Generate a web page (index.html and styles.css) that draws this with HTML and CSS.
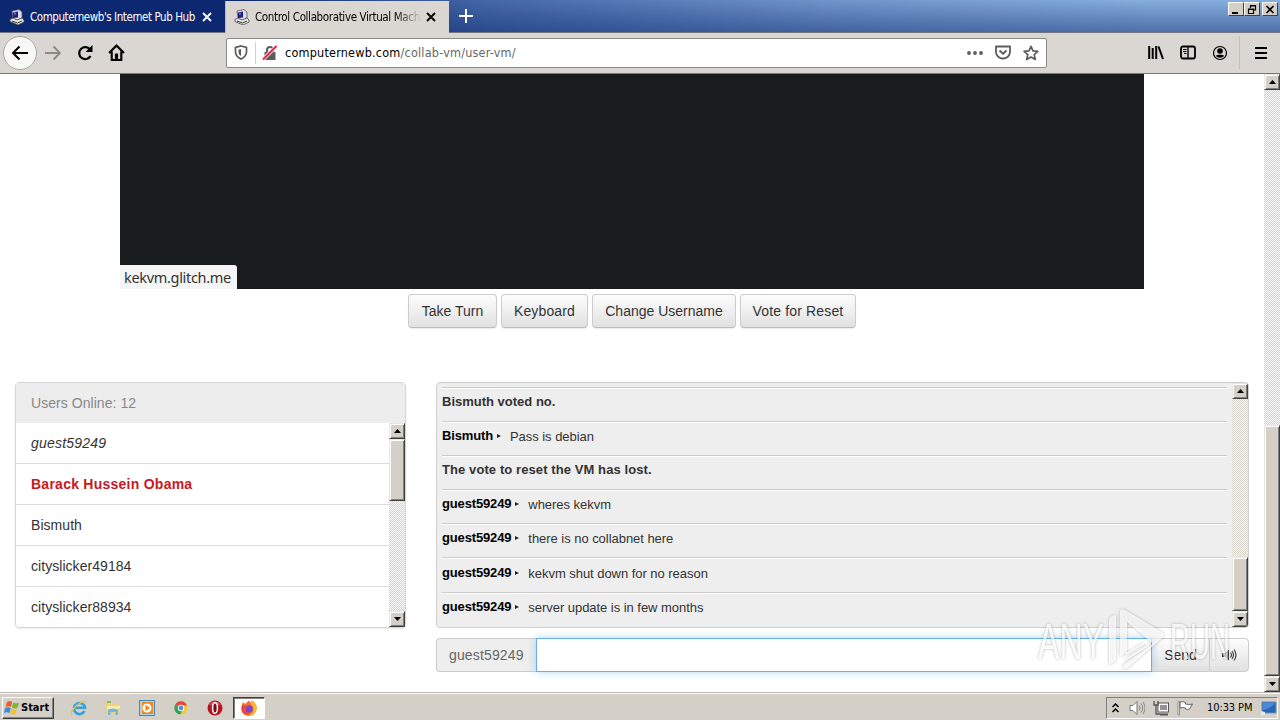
FILE: index.html
```html
<!DOCTYPE html>
<html lang="en">

    <head>
        <meta charset="UTF-8">
        <title>Control Collaborative Virtual Machines</title>
        <link rel="stylesheet" href="styles.css">
    </head>

    <body>
        <!-- shared icons -->
        <svg class="defs">
            <symbol id="pc" viewBox="0 0 16 16">
                <path d="M3 2l7-1.500 3 2.500v6l-5 2.500-4-2z" fill="#dcdce6" stroke="#55556a" stroke-width=".8" />
                <path d="M4 3.500l5-1v6l-5 .5z" fill="#20207c" />
                <path d="M5 4l2-.3-1 3z" fill="#7c8cd8" />
                <path d="M1 10.500l3-1.500 4 2 5-2 2 2v2l-6 3-8-3.500z" fill="#e8e8e8" stroke="#444" stroke-width=".8" />
                <path d="M3 12l5.500 2 4.500-2" fill="none" stroke="#333" />
            </symbol>
            <symbol id="cross" viewBox="0 0 10 10">
                <path d="M1 1l8 8M9 1l-8 8" fill="none" stroke="currentColor" stroke-width="1.800" />
            </symbol>
            <symbol id="up" viewBox="0 0 7 4">
                <path d="M0 4h7L3.500 0z" />
            </symbol>
            <symbol id="down" viewBox="0 0 7 4">
                <path d="M0 0h7L3.500 4z" />
            </symbol>
        </svg>

        <div class="tabs">
            <div class="tab">
                <svg class="favicon"><use href="#pc" /></svg>
                <span class="tab-title first">Computernewb's Internet Pub Hub</span>
                <svg class="close"><use href="#cross" /></svg>
            </div>
            <div class="tab active">
                <svg class="favicon"><use href="#pc" /></svg>
                <span class="tab-title second">Control Collaborative Virtual Machi</span>
                <svg class="close"><use href="#cross" /></svg>
            </div>
            <svg class="new-tab" viewBox="0 0 14 14"><path d="M7 0v14M0 7h14" stroke="#fff" stroke-width="2" /></svg>
            <div class="window-buttons">
                <span class="win-btn"><svg viewBox="0 0 12 11"><path d="M2 9h6" stroke="#000" stroke-width="2" /></svg></span>
                <span class="win-btn"><svg viewBox="0 0 12 11"><path d="M4.500 4V1.500h5v4.500H8M4 2h6M2.500 5h5v4.500h-5zM2 5.500h6" fill="none" stroke="#000" stroke-width="1.200" /></svg></span>
                <span class="win-btn last"><svg viewBox="0 0 12 11"><path d="M2.500 2l7 7M9.500 2l-7 7" stroke="#000" stroke-width="1.600" /></svg></span>
            </div>
        </div>

        <div class="toolbar">
            <div class="back"><svg width="18" height="16" viewBox="0 0 18 16"><path d="M17 8H2M8.500 1.500L2 8l6.500 6.500" fill="none" stroke="#000" stroke-width="2" /></svg></div>
            <svg class="forward" viewBox="0 0 18 16"><path d="M1 8h15M9.500 1.500L16 8l-6.500 6.500" fill="none" stroke="#8b8984" stroke-width="1.800" /></svg>
            <svg class="reload" viewBox="0 0 16 16"><path d="M13 4.500A6 6 0 1 0 13.500 11" fill="none" stroke="#000" stroke-width="2.200" /><path d="M15.500 0v7h-7z" /></svg>
            <svg class="home" viewBox="0 0 16 16"><path d="M1 8.500L8 1.500l7 7M3.500 7v8h9V7" fill="none" stroke="#000" stroke-width="2" /><path d="M6.500 9h3v6h-3z" /></svg>
            <div class="url-bar">
                <svg class="shield" viewBox="0 0 14 15"><path d="M7 1l5.500 1.500V7c0 3.500-2.500 5.500-5.500 7-3-1.500-5.500-3.500-5.500-7V2.500z" fill="none" stroke="#5c5c5c" stroke-width="1.700" /><path d="M7 4v7c-1.800-1-2.500-2.500-2.500-4V4.700z" fill="#5c5c5c" /></svg>
                <i class="url-sep"></i>
                <svg class="lock" viewBox="0 0 16 16"><path d="M5 8V5a3 3 0 0 1 6 0v3" fill="none" stroke="#5c5c5c" stroke-width="2" /><path d="M2.500 7h11v8h-11z" fill="#5c5c5c" /><path d="M1 14.500L14 1.500" stroke="#fff" stroke-width="3.500" /><path d="M1 14.500L14.500 1" stroke="#e22850" stroke-width="2.200" /></svg>
                <span class="url"><b>computernewb.com</b>/collab-vm/user-vm/</span>
                <svg class="dots" viewBox="0 0 16 4" fill="#5c5c5c"><circle cx="2" cy="2" r="1.900" /><circle cx="8" cy="2" r="1.900" /><circle cx="14" cy="2" r="1.900" /></svg>
                <svg class="pocket" viewBox="0 0 16 15"><path d="M1 1.500h14V7c0 4-3.500 6.500-7 6.500S1 11 1 7z" fill="none" stroke="#5c5c5c" stroke-width="1.800" stroke-linejoin="round" /><path d="M4.500 5.500L8 8.800l3.500-3.300" fill="none" stroke="#5c5c5c" stroke-width="1.900" /></svg>
                <svg class="star" viewBox="0 0 16 16"><path d="M8 1.300l2 4.500 4.900.5-3.700 3.300 1.100 4.900L8 12l-4.300 2.500 1.100-4.900L1.100 6.300 6 5.800z" fill="none" stroke="#5c5c5c" stroke-width="1.700" stroke-linejoin="round" /></svg>
            </div>
            <div class="tools">
                <svg width="16" height="15" viewBox="0 0 16 15"><path d="M1.200 1v13M4.700 3v11M8.200 1v13M10.500 1.500l4.500 12.500" stroke="#000" stroke-width="2" /></svg>
                <svg width="16" height="15" viewBox="0 0 16 15"><rect x="1" y="1.500" width="14" height="12" rx="2" fill="none" stroke="#000" stroke-width="1.800" /><path d="M8 2v11" stroke="#000" stroke-width="1.400" /><path d="M3 4.500h3.500M3 6.500h3.500M4 8.500h2.500" stroke="#000" /></svg>
                <svg width="16" height="16" viewBox="0 0 16 16"><circle cx="8" cy="8" r="6.500" fill="none" stroke="#000" stroke-width="1.200" /><circle cx="8" cy="6" r="2.800" /><path d="M3.800 10.800c1-1.500 7.400-1.500 8.400 0-1.500 2.600-6.900 2.600-8.400 0z" /></svg>
                <i class="tool-sep"></i>
                <svg width="12" height="12" viewBox="0 0 12 12"><path d="M0 1h12M0 6h12M0 11h12" stroke="#000" stroke-width="2" /></svg>
            </div>
        </div>

        <div class="viewport">
            <div class="page">
                <div class="display">
                    <span class="status">kekvm.glitch.me</span>
                </div>
                <div class="controls">
                    <button class="btn turn">Take Turn</button>
                    <button class="btn keyboard">Keyboard</button>
                    <button class="btn rename">Change Username</button>
                    <button class="btn vote">Vote for Reset</button>
                </div>
                <div class="columns">
                    <div class="users">
                        <div class="users-head">Users Online: 12</div>
                        <div class="users-body">
                            <div class="users-list">
                                <div class="user me"><span>guest59249</span></div>
                                <div class="user admin"><span>Barack Hussein Obama</span></div>
                                <div class="user"><span>Bismuth</span></div>
                                <div class="user"><span>cityslicker49184</span></div>
                                <div class="user"><span>cityslicker88934</span></div>
                            </div>
                            <div class="scrollbar">
                                <span class="arrow"><svg><use href="#up" /></svg></span>
                                <span class="thumb users-thumb"></span>
                                <span class="arrow bottom"><svg><use href="#down" /></svg></span>
                            </div>
                        </div>
                    </div>
                    <div class="chat">
                        <div class="chat-box">
                            <div class="messages">
                                <div class="msg"><b class="notice">Bismuth voted no.</b></div>
                                <div class="msg"><b>Bismuth</b><i></i><span>Pass is debian</span></div>
                                <div class="msg"><b class="notice long">The vote to reset the VM has lost.</b></div>
                                <div class="msg"><b>guest59249</b><i></i><span>wheres kekvm</span></div>
                                <div class="msg"><b>guest59249</b><i></i><span>there is no collabnet here</span></div>
                                <div class="msg tall"><b>guest59249</b><i></i><span>kekvm shut down for no reason</span></div>
                                <div class="msg"><b>guest59249</b><i></i><span>server update is in few months</span></div>
                            </div>
                            <div class="scrollbar">
                                <span class="arrow"><svg><use href="#up" /></svg></span>
                                <span class="thumb chat-thumb"></span>
                                <span class="arrow bottom"><svg><use href="#down" /></svg></span>
                            </div>
                        </div>
                        <div class="input-group">
                            <span class="addon">guest59249</span>
                            <input class="chat-input" type="text">
                            <button class="send">Send</button>
                            <button class="sound"><svg width="15" height="12" viewBox="0 0 15 12"><path d="M0 4h3l4-3.500v11L3 8H0z" fill="#444" /><path d="M8.500 3.500q2 2.500 0 5M10 2q3 4 0 8M12 .5q4 5.500 0 11" fill="none" stroke="#444" stroke-width="1.200" /></svg></button>
                        </div>
                    </div>
                </div>
            </div>
            <div class="scrollbar">
                <span class="arrow"><svg><use href="#up" /></svg></span>
                <span class="thumb page-thumb"></span>
                <span class="arrow bottom"><svg><use href="#down" /></svg></span>
            </div>
        </div>

        <div class="taskbar">
            <div class="start">
                <svg width="16" height="16" viewBox="0 0 16 16"><path d="M3 2q3-2 5 0L7 7Q4.500 5.500 1.500 7z" fill="#e8602c" /><path d="M9 2.500q3 1.500 6 0L13.500 8q-3 1.200-5.500-.5z" fill="#7fb62e" /><path d="M1.200 8q3-1.500 5.500 0L5.500 13Q3 11.500 0 13z" fill="#3c8ad8" /><path d="M7.500 8.500q2.500 1.500 5.500.5l-1.500 5q-3 1.200-5.200-.5z" fill="#f4c12c" /></svg>
                <span>Start</span>
            </div>
            <div class="launchers">
                <svg viewBox="0 0 18 18"><path d="M14.500 12A5.500 5.500 0 1 1 15 8.800H5" fill="none" stroke="#35a0dd" stroke-width="2.600" /><path d="M2 16C-1 13 10 1 16.500 2.500" fill="none" stroke="#e9c34c" stroke-width="1.400" /></svg>
                <svg viewBox="0 0 18 18"><path d="M2 3h6l1 2h7v9H2z" fill="#ecd281" /><path d="M3 2h4v2H3z" fill="#7fc264" /><path d="M3 7h13v3H3z" fill="#f8eab5" /><path d="M4 16v-5q5-3 10 0v5h-2.500v-3h-5v3z" fill="#72b8dc" /></svg>
                <svg viewBox="0 0 18 18"><rect x="1.500" y="1.500" width="15" height="15" fill="#a8d2ee" stroke="#4289bd" /><rect x="4" y="3" width="11" height="12" fill="#f08a1c" /><circle cx="9" cy="9" r="4.500" fill="#fff" /><path d="M7.500 6l4.500 3-4.500 3z" fill="#ee7d11" /></svg>
                <svg viewBox="0 0 18 18"><circle cx="9" cy="9" r="6.500" fill="#f6c82d" /><path d="M9 9L3.200 5.800A6.500 6.500 0 0 1 15 6.500H9z" fill="#e1493a" /><path d="M9 9L3.200 5.800A6.500 6.500 0 0 0 8 15.500l3-5z" fill="#32a153" /><circle cx="9" cy="9" r="3.200" fill="#fff" /><circle cx="9" cy="9" r="2.400" fill="#4c8ee8" /></svg>
                <svg viewBox="0 0 18 18"><circle cx="9" cy="9" r="7.500" fill="#b51620" /><path d="M3 5.500Q9-1 15 5.500 9 8 3 5.500z" fill="#d9505a" /><ellipse cx="9" cy="9" rx="2.400" ry="5.300" fill="#7b0b12" stroke="#fff" stroke-width="1.500" /></svg>
            </div>
            <div class="running">
                <svg width="18" height="18" viewBox="0 0 18 18"><path d="M9 17C3 17 0 12 1.500 7L3 3l2 2 4-3.500 2 2.500 2-2c3 3 4 5 3.500 8-.5 4-3.500 7-7.500 7z" fill="#fb7126" /><path d="M11 1c5 3 7 7 5 11-1.500 3-4 4.500-7 4.500 5-3 6-8 2-11z" fill="#fdb82c" /><circle cx="9" cy="10" r="3.800" fill="#7548cd" /><path d="M2 6c4 1 4 2 7 2-2 2-4 2-5 1 0 3 3 6 7 4-3 4-9 2-9-3z" fill="#ef3c4b" /></svg>
            </div>
            <div class="tray">
                <svg width="7" height="10" viewBox="0 0 7 10"><path d="M.5 4l3-3 3 3M.5 9l3-3 3 3" fill="none" stroke="#000" stroke-width="1.500" /></svg>
                <svg class="volume" viewBox="0 0 16 16"><path d="M1 5.500h3L8 1.500v13L4 10.500H1z" fill="#fff" stroke="#777" /><path d="M10 5.500q2 2.500 0 5M12 3.500q3.500 4.500 0 9M14 2q4 6 0 12" fill="none" stroke="#8b8b8b" /></svg>
                <svg class="network" viewBox="0 0 16 16"><rect x="5" y="3" width="10.500" height="9" fill="#fff" stroke="#555" /><path d="M7 5h7v5H7z" fill="#929292" /><path d="M7 14.500h8" stroke="#555" stroke-width="2" /><path d="M1 1v4h4V1M3 5v9h4" fill="none" stroke="#555" stroke-width="1.300" /></svg>
                <svg class="flag" viewBox="0 0 16 16"><path d="M1 1.500h1.500V15H1z" fill="#fff" stroke="#777" stroke-width=".8" /><path d="M3 2q3-1 5.500.5V4q3 1 7 0l-3 5q-2 1-4 0V8Q6 7 3 8z" fill="#fff" stroke="#666" /></svg>
                <span class="clock">10:33 PM</span>
                <svg class="desktop" viewBox="0 0 16 14"><path d="M1 1h14v11H1z" fill="#2865b5" stroke="#6c8fbb" /><path d="M2 9q8-1 12-7H2z" fill="#478bd8" /><path d="M0 10l4 1v3H0z" fill="#dde8f2" /></svg>
            </div>
        </div>

        <!-- watermark -->
        <svg class="watermark" viewBox="0 0 200 66">
            <path class="logo" d="M73 14q0-6 7-6v46l-7 4zM84 4q1-3 5-1l37 22q4 3 0 6L92 61q-5 2-6-2l29-21q2-1 0-3L91 15v30l-7 5z" />
            <path class="logo-lines" d="M90 47l18-11M89 53l24-15" />
            <text class="mark" x="2" y="52" textLength="66" lengthAdjust="spacingAndGlyphs">ANY</text>
            <text class="mark" x="134" y="52" textLength="60" lengthAdjust="spacingAndGlyphs">RUN</text>
        </svg>
    </body>

</html>
```
FILE: styles.css
```css
* {
    box-sizing: border-box;
}

body {
    display: flex;
    flex-direction: column;
    width: 1280px;
    height: 720px;
    margin: 0;
    overflow: hidden;
    background-color: white;
    font-family: "Liberation Sans", Arial, sans-serif;
    font-size: 14px;
    color: #333;
}

svg {
    display: block;
    flex: none;
}

.defs {
    position: absolute;
    width: 0;
    height: 0;
}

/* tabs */
.tabs {
    display: flex;
    flex: none;
    height: 33px;
    border-bottom: 1px solid #6f7680;
    background: linear-gradient(to bottom, rgba(10, 36, 106, 0), rgba(10, 36, 106, 0.45)),
        linear-gradient(to right, #0a246a 17%, #4468a8 38%, #7095cb 65%, #86aede 90%);
    font-family: "DejaVu Sans Condensed", "DejaVu Sans", sans-serif;
    font-size: 11.5px;
}

.tab {
    display: flex;
    align-items: center;
    width: 225px;
    padding: 1px 0 0 9px;
    color: white;
    background-color: #0c2871;
}

.tab.active {
    height: 33px;
    margin-top: 1px;
    width: 224px;
    background-color: #dad7d2;
    border-left: 1px solid #b8b8b8;
    padding: 0 0 2px 8px;
    color: black;
}

.favicon {
    width: 16px;
    height: 16px;
}

.tab-title {
    width: 168px;
    margin-left: 5px;
    overflow: hidden;
    white-space: nowrap;
}

.tab-title.first {
    letter-spacing: -0.44px;
}

.tab-title.second {
    width: 167px;
    letter-spacing: -0.36px;
    -webkit-mask-image: linear-gradient(to right, #000 84%, transparent);
    mask-image: linear-gradient(to right, #000 84%, transparent);
}

.close {
    width: 10px;
    height: 10px;
    margin-left: 4px;
}

.new-tab {
    width: 14px;
    height: 14px;
    margin: 9px 0 0 10px;
}

.window-buttons {
    display: flex;
    margin: 2px 2px 0 auto;
}

.win-btn {
    width: 16px;
    height: 14px;
    padding: 1px;
    background-color: #d4d0c8;
    border: 1px solid;
    border-color: #fff #404040 #404040 #fff;
}

.win-btn.last {
    margin-left: 2px;
}

/* toolbar */
.toolbar {
    display: flex;
    align-items: center;
    flex: none;
    height: 41px;
    padding: 0 0 1px 3px;
    background-color: #dad7d2;
    border-bottom: 1px solid #777;
}

.back {
    display: flex;
    align-items: center;
    justify-content: center;
    width: 34px;
    height: 34px;
    background-color: #f8f8f7;
    border: 1px solid #aaa8a4;
    border-radius: 50%;
}

.forward {
    width: 18px;
    height: 16px;
    margin-left: 7px;
}

.reload {
    width: 16px;
    height: 16px;
    margin-left: 15px;
}

.home {
    width: 17px;
    height: 17px;
    margin-left: 15px;
}

.url-bar {
    display: flex;
    align-items: center;
    width: 821px;
    height: 30px;
    margin-left: 101px;
    padding-left: 7px;
    background-color: white;
    border: 1px solid #8a8a8a;
    border-radius: 2px;
}

.shield {
    width: 14px;
    height: 15px;
}

.url-sep {
    width: 1px;
    height: 22px;
    margin: 0 6px 0 7px;
    background-color: #d0d0d0;
}

.lock {
    width: 16px;
    height: 16px;
}

.url {
    width: 682px;
    margin-left: 7px;
    font-family: "DejaVu Sans Condensed", "DejaVu Sans", sans-serif;
    font-size: 12.5px;
    letter-spacing: 0.22px;
    color: #666;
}

.url b {
    font-weight: normal;
    color: black;
}

.dots {
    width: 16px;
    height: 4px;
}

.pocket {
    width: 16px;
    height: 15px;
    margin-left: 12px;
}

.star {
    width: 16px;
    height: 16px;
    margin-left: 12px;
}

.tools {
    display: flex;
    align-items: center;
    gap: 16px;
    margin-left: 101px;
}

.tool-sep {
    width: 1px;
    height: 33px;
    margin: 0 -1px 0 -5px;
    background-color: #c2bfba;
}

/* scrollbars */
.scrollbar {
    display: flex;
    flex: none;
    flex-direction: column;
    width: 16px;
    background: repeating-conic-gradient(#d4d0c8 0 25%, #fff 0 50%) 0 0 / 2px 2px;
}

.arrow,
.thumb {
    flex: none;
    background-color: #d4d0c8;
    border: 1px solid;
    border-color: #e8e6e0 #404040 #404040 #e8e6e0;
    box-shadow: inset 1px 1px #fff, inset -1px -1px #808080;
}

.arrow {
    display: flex;
    align-items: center;
    justify-content: center;
    height: 16px;
}

.arrow svg {
    width: 7px;
    height: 4px;
}

.arrow.bottom {
    margin-top: auto;
}

.users-thumb {
    height: 62px;
}

.chat-thumb {
    height: 54px;
    margin-top: 158px;
}

.page-thumb {
    height: 251px;
    margin-top: 335px;
}

/* page */
.viewport {
    display: flex;
    flex: none;
    height: 618px;
}

.page {
    width: 1264px;
}

.display {
    display: flex;
    align-items: flex-end;
    width: 1024px;
    height: 215px;
    margin-left: 120px;
    background-color: #191c1d;
}

.status {
    width: 117px;
    height: 24px;
    padding-left: 4px;
    line-height: 25px;
    white-space: nowrap;
    background-color: #f5f5f5;
    border-top-right-radius: 3px;
    font-family: "Noto Sans", sans-serif;
    font-size: 14.5px;
    letter-spacing: -0.32px;
}

.controls {
    display: flex;
    justify-content: center;
    gap: 4px;
    margin-top: 5px;
}

button {
    padding: 0;
    font-family: inherit;
    font-size: 14px;
    color: #333;
    white-space: nowrap;
    background: linear-gradient(#fdfdfd, #e1e1e1);
    border: 1px solid #ccc;
}

.btn {
    height: 34px;
    border-radius: 4px;
    border-bottom-color: #bbb;
    box-shadow: 0 1px 1px rgba(0, 0, 0, 0.08);
}

.turn {
    width: 89px;
}

.keyboard {
    width: 87px;
    letter-spacing: 0.15px;
}

.rename {
    width: 144px;
}

.vote {
    width: 116px;
    letter-spacing: 0.15px;
}

.columns {
    display: flex;
    gap: 30px;
    margin: 54px 0 0 15px;
}

.users {
    width: 391px;
    height: 246px;
    border: 1px solid #d6d6d6;
    border-radius: 4px;
    box-shadow: 0 1px 2px rgba(0, 0, 0, 0.08);
}

.users-head {
    height: 40px;
    padding-left: 15px;
    line-height: 40px;
    letter-spacing: 0.05px;
    color: #888;
    background-color: #ededed;
}

.users-body {
    display: flex;
    height: 204px;
}

.users-list {
    flex: 1;
}

.user {
    height: 41px;
    padding-left: 15px;
    line-height: 40px;
    letter-spacing: 0.05px;
    border-bottom: 1px solid #ddd;
}

.user:last-child {
    height: 40px;
    border-bottom: none;
}

.me {
    font-style: italic;
    letter-spacing: 0.2px;
}

.admin {
    font-weight: bold;
    letter-spacing: 0.25px;
    color: #c9181e;
}

.chat {
    width: 813px;
}

.chat-box {
    display: flex;
    height: 246px;
    overflow: hidden;
    background-color: #eee;
    border: 1px solid #d0d0d0;
    border-radius: 4px;
}

.messages {
    flex: 1;
    padding: 4px 5px 0;
}

.msg {
    display: flex;
    align-items: center;
    height: 34px;
    padding-bottom: 5px;
    border-top: 1px solid #ccc;
    box-shadow: inset 0 1px #fff;
    font-size: 13px;
}

.msg.tall {
    height: 35px;
}

.msg b {
    padding-bottom: 1px;
    letter-spacing: -0.15px;
    color: black;
}

.msg .notice {
    padding-bottom: 2px;
    letter-spacing: 0;
    color: #333;
}

.msg .long {
    letter-spacing: 0.09px;
}

.msg i {
    margin: 0 9px 0 4px;
    border: 2.5px solid transparent;
    border-left: 4px solid #222;
    border-right: 0;
}

.msg span {
    padding-top: 1px;
    letter-spacing: -0.04px;
}

.input-group {
    display: flex;
    height: 34px;
    margin-top: 10px;
}

.addon {
    width: 100px;
    padding-left: 12px;
    line-height: 32px;
    letter-spacing: 0.15px;
    color: #666;
    background-color: #eee;
    border: 1px solid #ccc;
    border-right: none;
    border-radius: 4px 0 0 4px;
}

.chat-input {
    width: 616px;
    padding: 0 12px;
    border: 1px solid #66afe9;
    box-shadow: 0 0 8px rgba(102, 175, 233, 0.5);
    z-index: 1;
}

.send {
    width: 57px;
    border-width: 1px 0;
}

.sound {
    display: flex;
    align-items: center;
    justify-content: center;
    width: 40px;
    border-radius: 0 4px 4px 0;
}

/* taskbar */
.taskbar {
    display: flex;
    align-items: center;
    flex: none;
    height: 28px;
    padding: 2px 2px 0 2px;
    background-color: #d4d0c8;
    border-top: 1px solid #bbb8b2;
    box-shadow: inset 0 1px #fff;
}

.start {
    display: flex;
    align-items: center;
    gap: 1px;
    width: 52px;
    height: 22px;
    padding-left: 1px;
    border: 1px solid;
    border-color: #fff #404040 #404040 #fff;
    box-shadow: inset -1px -1px #808080;
    font-family: "DejaVu Sans Condensed", "DejaVu Sans", sans-serif;
    font-size: 11px;
    font-weight: bold;
    color: black;
}

.launchers {
    display: flex;
    gap: 16px;
    margin-left: 16px;
}

.launchers svg {
    width: 18px;
    height: 18px;
}

.running {
    display: flex;
    align-items: center;
    justify-content: center;
    width: 32px;
    height: 22px;
    margin-left: 9px;
    background-color: white;
    border: 1px solid;
    border-color: #404040 #fff #fff #404040;
    box-shadow: inset 1px 1px #808080;
}

.tray {
    display: flex;
    align-items: center;
    width: 172px;
    height: 22px;
    margin-left: auto;
    padding-left: 5px;
    border: 1px solid;
    border-color: #808080 #fff #fff #808080;
}

.volume {
    width: 16px;
    height: 16px;
    margin-left: 10px;
}

.network,
.flag {
    width: 16px;
    height: 16px;
    margin-left: 8px;
}

.clock {
    width: 46px;
    margin-left: 14px;
    font-family: "DejaVu Sans Condensed", "DejaVu Sans", sans-serif;
    font-size: 11px;
    letter-spacing: -0.1px;
    white-space: nowrap;
    color: black;
}

.desktop {
    width: 16px;
    height: 14px;
    margin-left: 8px;
}

.watermark {
    position: absolute;
    left: 1036px;
    top: 607px;
    z-index: 2;
    width: 200px;
    height: 66px;
    filter: drop-shadow(0 0 1.5px rgba(0, 0, 0, 0.4));
    opacity: 0.75;
}

.logo {
    fill: rgba(255, 255, 255, 0.85);
}

.logo-lines {
    fill: none;
    stroke: rgba(255, 255, 255, 0.85);
    stroke-width: 1.5px;
}

.mark {
    font-family: "Liberation Sans", Arial, sans-serif;
    font-size: 50px;
    fill: rgba(255, 255, 255, 0.9);
}
```
